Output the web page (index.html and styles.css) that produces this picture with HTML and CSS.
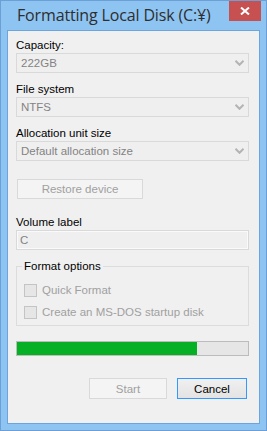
FILE: index.html
```html
<!DOCTYPE html>
<html>
<head>
<meta charset="utf-8">
<link rel="stylesheet" href="styles.css">
</head>
<body>
<div class="window">
  <div class="titlebar">
    <span class="title">Formatting Local Disk (C:¥)</span>
    <div class="close">
      <svg width="10" height="8" viewBox="0 0 10 8"><path d="M1 0.5 L9 7.5 M9 0.5 L1 7.5" stroke="#fff" stroke-width="2" fill="none"/></svg>
    </div>
  </div>
  <div class="client">
    <div class="field">
      <div class="label">Capacity:</div>
      <div class="combo"><span>222GB</span><svg class="chev" width="9" height="6" viewBox="0 0 9 6"><path d="M0.5 0.8 L4.5 4.8 L8.5 0.8" stroke="#b4b4b4" stroke-width="2" fill="none"/></svg></div>
    </div>
    <div class="field">
      <div class="label">File system</div>
      <div class="combo"><span>NTFS</span><svg class="chev" width="9" height="6" viewBox="0 0 9 6"><path d="M0.5 0.8 L4.5 4.8 L8.5 0.8" stroke="#b4b4b4" stroke-width="2" fill="none"/></svg></div>
    </div>
    <div class="field">
      <div class="label">Allocation unit size</div>
      <div class="combo"><span>Default allocation size</span><svg class="chev" width="9" height="6" viewBox="0 0 9 6"><path d="M0.5 0.8 L4.5 4.8 L8.5 0.8" stroke="#b4b4b4" stroke-width="2" fill="none"/></svg></div>
    </div>
    <div class="btn restore">Restore device</div>
    <div class="field volume">
      <div class="label">Volume label</div>
      <div class="textbox">C</div>
    </div>
    <fieldset class="options">
      <legend>Format options</legend>
      <div class="check"><span class="box"></span>Quick Format</div>
      <div class="check"><span class="box"></span>Create an MS-DOS startup disk</div>
    </fieldset>
    <div class="progress"><div class="fill" style="width:78%"></div></div>
    <div class="actions">
      <div class="btn start">Start</div>
      <div class="btn cancel">Cancel</div>
    </div>
  </div>
</div>
</body>
</html>
```
FILE: styles.css
```css
html, body {
  margin: 0;
  padding: 0;
}
body {
  width: 267px;
  height: 431px;
  font-family: "Liberation Sans", Arial, sans-serif;
  font-size: 11.5px;
  color: #000;
}
.window {
  box-sizing: border-box;
  width: 267px;
  height: 431px;
  background: #8ec4f2;
  border: 1px solid #6b9fd6;
  display: flex;
  flex-direction: column;
}
.titlebar {
  height: 29px;
  display: flex;
  justify-content: space-between;
  align-items: flex-start;
}
.title {
  font-family: "Open Sans", "Noto Sans", sans-serif;
  font-size: 16px;
  letter-spacing: -0.15px;
  color: #2e2e2e;
  padding-left: 16px;
  line-height: 29px;
  white-space: nowrap;
}
.close {
  width: 32px;
  height: 20px;
  margin-right: 5px;
  background: #c75050;
  display: flex;
  align-items: center;
  justify-content: center;
}
.client {
  box-sizing: border-box;
  height: 394px;
  margin: 0 6px;
  border: 1px solid #6ca4dc;
  background: #f0f0f0;
  padding: 6px 10px 0 8px;
  display: flex;
  flex-direction: column;
}
.field + .field {
  margin-top: 8px;
}
.label {
  line-height: 16px;
  height: 16px;
}
.combo {
  box-sizing: border-box;
  height: 20px;
  border: 1px solid #d9d9d9;
  background: #efefef;
  color: #838383;
  padding: 0 4px 0 4px;
  display: flex;
  align-items: center;
  justify-content: space-between;
}
.btn {
  box-sizing: border-box;
  height: 20px;
  display: flex;
  align-items: center;
  justify-content: center;
  border: 1px solid #d9d9d9;
  background: #f4f4f4;
  color: #a0a0a0;
}
.restore {
  width: 126px;
  margin: 18px 0 0 1px;
}
.volume {
  margin-top: 15px;
}
.textbox {
  box-sizing: border-box;
  height: 20px;
  border: 1px solid #d9d9d9;
  box-shadow: inset 0 0 0 1px #fafafa;
  background: #efefef;
  color: #838383;
  padding-left: 3px;
  line-height: 18px;
}
.options {
  margin: 8px 0 0 0;
  padding: 8px 7px 5px 7px;
  border: 1px solid #dcdcdc;
  min-width: 0;
}
.options legend {
  padding: 0 2px;
  margin-left: -2px;
  line-height: 16px;
}
.check {
  height: 16px;
  display: flex;
  align-items: center;
  color: #a0a0a0;
}
.check + .check {
  margin-top: 6px;
}
.box {
  box-sizing: border-box;
  width: 13px;
  height: 13px;
  border: 1px solid #c4c4c4;
  background: #e6e6e6;
  margin-right: 5px;
}
.progress {
  box-sizing: border-box;
  height: 15px;
  margin-top: 15px;
  border: 1px solid #bcbcbc;
  background: #e6e6e6;
}
.fill {
  height: 100%;
  background: #06b025;
}
.actions {
  display: flex;
  justify-content: flex-end;
  gap: 10px;
  margin: 22px 2px 0 0;
}
.actions .btn {
  height: 21px;
}
.start {
  width: 78px;
  border-color: #d9d9d9;
}
.cancel {
  width: 70px;
  border-color: #3399ff;
  background: linear-gradient(#f0f0f0, #e3e3e3);
  color: #000;
}
```
